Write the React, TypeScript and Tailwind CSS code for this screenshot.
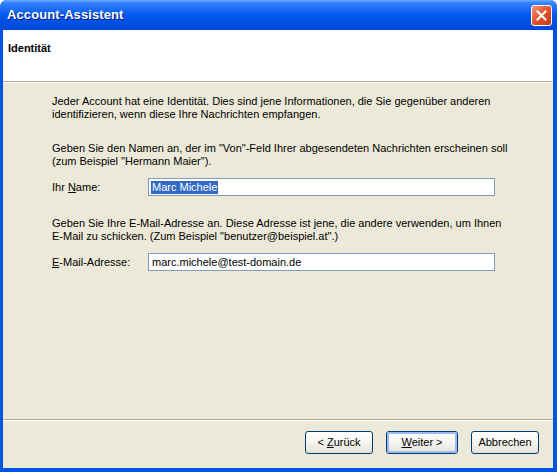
import React from 'react'

/**
 * Windows XP style "Account-Assistent" wizard page (Identität).
 */

const FONT = '"Liberation Sans", Arial, sans-serif'

function Mn({ children }: { children: React.ReactNode }) {
  return <span className="underline underline-offset-[1px]">{children}</span>
}

function XpButton({
  children,
  isDefault,
  className = '',
}: {
  children: React.ReactNode
  isDefault?: boolean
  className?: string
}) {
  return (
    <button
      type="button"
      className={`h-[23px] w-[68px] rounded-[3px] border border-[#003c74] bg-gradient-to-b from-[#ffffff] via-[#f4f4f0] to-[#e3e2da] p-0 text-[11px] text-black ${className}`}
    >
      <span
        className={`flex h-full w-full items-center justify-center rounded-[2px] ${
          isDefault ? 'border-2 border-[#9dbbf0]' : 'border-2 border-transparent'
        }`}
      >
        <span className="whitespace-pre">{children}</span>
      </span>
    </button>
  )
}

export default function App() {
  return (
    <div
      className="flex h-[472px] w-[557px] flex-col overflow-hidden rounded-t-[7px] bg-[#0054e3]"
      style={{ fontFamily: FONT }}
    >
      {/* Title bar */}
      <div className="relative flex h-[30px] shrink-0 items-center bg-gradient-to-b from-[#3d8cff] via-[#0058ee] to-[#0048d8] pl-[7px] pr-[5px]">
        <div className="pointer-events-none absolute inset-x-0 top-0 h-[3px] bg-gradient-to-b from-[#6aaeff] to-[#2f7dff]" />
        <span className="relative flex-1 text-[13px] font-bold tracking-[0.1px] text-white [text-shadow:1px_1px_0_#0a1e7a]">
          Account-Assistent
        </span>
        <div className="relative flex h-[21px] w-[21px] items-center justify-center rounded-[3px] border border-white bg-gradient-to-br from-[#f0907a] via-[#e0522c] to-[#c43a12]">
          <svg width="11" height="11" viewBox="0 0 11 11">
            <path d="M1.5 1.5 L9.5 9.5 M9.5 1.5 L1.5 9.5" stroke="#fff" strokeWidth="2" strokeLinecap="square" />
          </svg>
        </div>
      </div>

      {/* Client */}
      <div className="flex min-h-0 flex-1 flex-col pl-[3px] pr-[4px] pb-[4px]">
        <div className="flex flex-1 flex-col bg-[#ece9d8]">
          {/* Header */}
          <div className="h-[51px] shrink-0 bg-white pl-[5px] pt-[12px] text-[11px] font-bold leading-[13px] text-black">
            Identität
          </div>
          <div className="h-px bg-[#aca899]" />
          <div className="h-px bg-white" />

          {/* Content */}
          <div className="flex-1 pl-[49px] pt-[12px] text-[11px] leading-[13px] text-black">
            <p>
              Jeder Account hat eine Identität. Dies sind jene Informationen, die Sie gegenüber anderen
              <br />
              identifizieren, wenn diese Ihre Nachrichten empfangen.
            </p>
            <p className="mt-[21px]">
              Geben Sie den Namen an, der im "Von"-Feld Ihrer abgesendeten Nachrichten erscheinen soll
              <br />
              (zum Beispiel "Hermann Maier").
            </p>
            <div className="mt-[10px] flex h-[18px] items-center">
              <span className="w-[96px]">
                Ihr <Mn>N</Mn>ame:
              </span>
              <div className="flex h-[18px] w-[347px] items-center border border-[#7f9db9] bg-white pl-[2px]">
                <span className="bg-[#316ac5] px-px text-white">Marc Michele</span>
              </div>
            </div>
            <p className="mt-[21px]">
              Geben Sie Ihre E-Mail-Adresse an. Diese Adresse ist jene, die andere verwenden, um Ihnen
              <br />
              E-Mail zu schicken. (Zum Beispiel "benutzer@beispiel.at".)
            </p>
            <div className="mt-[10px] flex h-[18px] items-center">
              <span className="w-[96px]">
                <Mn>E</Mn>-Mail-Adresse:
              </span>
              <div className="flex h-[18px] w-[347px] items-center border border-[#7f9db9] bg-white pl-[3px]">
                marc.michele@test-domain.de
              </div>
            </div>
          </div>

          {/* Footer */}
          <div className="h-px bg-[#aca899]" />
          <div className="h-px bg-white" />
          <div className="flex h-[47px] shrink-0 items-start pl-[302px] pt-[10px]">
            <XpButton>
              &lt; <Mn>Z</Mn>urück
            </XpButton>
            <XpButton isDefault className="ml-[13px] w-[72px]">
              <Mn>W</Mn>eiter &gt;
            </XpButton>
            <XpButton className="ml-[13px]">Abbrechen</XpButton>
          </div>
        </div>
      </div>
    </div>
  )
}
